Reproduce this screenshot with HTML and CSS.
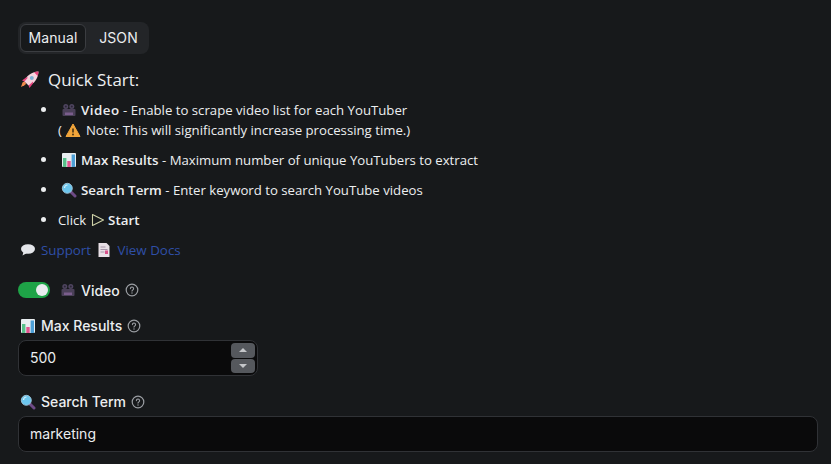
FILE: index.html
```html
<!DOCTYPE html>
<html lang="en">
<head>
<meta charset="utf-8">
<title>Quick Start</title>
<link rel="stylesheet" href="styles.css">
</head>
<body>
<svg class="defs" width="0" height="0" aria-hidden="true">
  <defs>
    <symbol id="cam" viewBox="0 0 16 16">
      <circle cx="4.800" cy="4.500" r="2.500" fill="#4f4560"/><circle cx="10.800" cy="4.500" r="2.500" fill="#4f4560"/>
      <rect x="1.500" y="7" width="13" height="7" rx="1" fill="#4a4058"/>
      <rect x="4" y="10.500" width="8" height="2.500" fill="#7a5d8c"/>
      <circle cx="4.800" cy="4.500" r="1" fill="#2a2534"/><circle cx="10.800" cy="4.500" r="1" fill="#2a2534"/>
    </symbol>
    <symbol id="chart" viewBox="0 0 16 16">
      <rect x="1" y="1" width="14" height="14" rx="1" fill="#e8edf0"/>
      <rect x="2" y="6" width="3.400" height="9" fill="#57c08a"/>
      <rect x="6.300" y="9" width="3.400" height="6" fill="#e2558f"/>
      <rect x="10.600" y="2.500" width="3.400" height="12.500" fill="#4d9fd6"/>
    </symbol>
    <symbol id="lens" viewBox="0 0 16 16">
      <path d="M9.500 9.500 14 14" stroke="#6d4a85" stroke-width="3" stroke-linecap="round"/>
      <circle cx="6.300" cy="6.300" r="5" fill="#6cc6ee"/>
      <circle cx="6.300" cy="6.300" r="5" fill="none" stroke="#9fc4d8" stroke-width=".9"/>
      <path d="M3.500 6a3 3 0 0 1 3-3" stroke="#d8f2fc" stroke-width="1.200" fill="none"/>
    </symbol>
    <symbol id="help" viewBox="0 0 14 14">
      <circle cx="7" cy="7" r="5.800" fill="none" stroke="#9b9ea3" stroke-width="1.200"/>
      <path d="M5.400 5.600a1.600 1.600 0 1 1 2.500 1.300c-.6.400-.9.700-.9 1.200" fill="none" stroke="#9b9ea3" stroke-width="1.100" stroke-linecap="round"/>
      <circle cx="7" cy="10" r=".7" fill="#9b9ea3"/>
    </symbol>
  </defs>
</svg>

<main class="page">
  <div class="tabs">
    <button class="tab tab-active">Manual</button>
    <button class="tab tab-json">JSON</button>
  </div>

  <h2 class="title">
    <svg class="rocket" viewBox="0 0 20 20" aria-hidden="true">
      <path d="M5 11 2.500 12.500 1 17l3.500-1.800L6 14z" fill="#f08a4b"/>
      <path d="M4.500 11.500C6 6 11 2 18.500 1.500 18 9 14 14 8.500 15.500z" fill="#f7d4df"/>
      <path d="M14 2.200c1.500-.5 3-.7 4.500-.7-.1 1.500-.3 3-.8 4.400z" fill="#e5447e"/>
      <path d="M4.500 11.500 2 10.500 6 7.500h2zM8.500 15.500 9.500 18l3.500-4.500v-2z" fill="#e5447e"/>
      <circle cx="11.800" cy="8" r="2" fill="#7fb2d6"/>
    </svg>
    <span>Quick Start:</span>
  </h2>

  <ul class="steps">
    <li>
      <svg class="emoji emoji-after"><use href="#cam"/></svg><b class="wide">Video</b> - Enable to scrape video list for each YouTuber<br>
      (<svg class="emoji warn" viewBox="0 0 16 16" aria-hidden="true"><path d="M8 2 15 14.500H1z" fill="#f2a53a" stroke="#f2a53a" stroke-linejoin="round"/><path d="M8 6.500v4" stroke="#3a2a10" stroke-width="1.500"/><circle cx="8" cy="12.500" r=".9" fill="#3a2a10"/></svg>Note: This will significantly increase processing time.)
    </li>
    <li><svg class="emoji emoji-after"><use href="#chart"/></svg><b>Max Results</b> - Maximum number of unique YouTubers to extract</li>
    <li><svg class="emoji emoji-after"><use href="#lens"/></svg><b>Search Term</b> - Enter keyword to search YouTube videos</li>
    <li>Click <svg class="play" viewBox="0 0 14 14" aria-hidden="true"><path d="M1.500 1.500 12.500 7 1.500 12.500z" fill="none" stroke="#cfd2a8" stroke-width="1.100" stroke-linejoin="round"/></svg> <b>Start</b></li>
  </ul>

  <p class="links">
    <svg class="emoji" viewBox="0 0 16 16" aria-hidden="true"><ellipse cx="8" cy="7" rx="7" ry="4.800" fill="#e4e6ea"/><path d="M3.500 10 2.500 13.500 7 11z" fill="#e4e6ea"/></svg><a class="link" href="#">Support</a>
    <svg class="emoji doc" viewBox="0 0 16 16" aria-hidden="true"><path d="M2.500 1h8l3 3v11h-11z" fill="#e8dfe6"/><path d="M4.500 5h5M4.500 7.500h7M4.500 10h4" stroke="#a594a8" stroke-width="1"/><rect x="9" y="8.500" width="3" height="3.500" fill="#d9508a"/></svg><a class="link link-docs" href="#">View Docs</a>
  </p>

  <div class="switch-row">
    <span class="toggle"><span class="knob"></span></span>
    <svg class="emoji"><use href="#cam"/></svg>
    <span class="label-text row-text">Video</span>
    <svg class="help"><use href="#help"/></svg>
  </div>

  <label class="field">
    <span class="label"><svg class="emoji"><use href="#chart"/></svg><span class="label-text">Max Results</span><svg class="help"><use href="#help"/></svg></span>
    <span class="input input-number">
      <span class="value">500</span>
      <span class="stepper">
        <span class="step"><span class="arrow-up"></span></span>
        <span class="step"><span class="arrow-down"></span></span>
      </span>
    </span>
  </label>

  <label class="field">
    <span class="label"><svg class="emoji"><use href="#lens"/></svg><span class="label-text">Search Term</span><svg class="help"><use href="#help"/></svg></span>
    <span class="input"><span class="value">marketing</span></span>
  </label>
</main>
</body>
</html>
```
FILE: styles.css
```css
* { box-sizing: border-box; }
html, body { margin: 0; height: 100%; }
body {
  background: #17191b;
  color: #eceef0;
  font-family: "Open Sans", "Noto Sans", sans-serif;
  overflow: hidden;
}
.defs { display: block; height: 0; }
.page { padding: 22px 13px 0 18px; }

.tabs {
  display: inline-flex;
  gap: 2px;
  padding: 2px;
  background: #232528;
  border-radius: 8px;
  height: 32px;
}
.tab {
  font: 400 14px/26px Inter, sans-serif;
  letter-spacing: .1px;
  color: #eceef0;
  background: none;
  border: 1px solid transparent;
  border-radius: 6px;
  padding: 0;
  height: 28px;
}
.tab-active { background: #17191b; border-color: #3b3d41; width: 66px; }
.tab-json { width: 59px; padding-left: 2px; }

.title {
  display: flex;
  align-items: center;
  gap: 8px;
  margin: 13px 0 0 2px;
  font-size: 16.900px;
  font-weight: 400;
  line-height: 26px;
}
.rocket { width: 20px; height: 20px; }

.steps {
  margin: 7px 0 0 2px;
  padding: 0 0 0 38px;
  font-size: 13.200px;
  line-height: 20px;
}
.steps li { margin-bottom: 10px; }
.steps li::marker { font-size: 14px; }
.steps b { font-weight: 600; font-size: 13.350px; }
.steps .wide { letter-spacing: .5px; }
.emoji { width: 16px; height: 16px; vertical-align: -3px; }
.emoji-after { margin: 0 4px 0 3px; }
.warn { margin: 0 5px 0 3px; }
.play { width: 14px; height: 14px; margin: 0 0 0 1px; vertical-align: -2px; }

.links { margin: 0 0 0 2px; font-size: 13.350px; line-height: 20px; }
.link { color: #2f4fa8; text-decoration: none; margin-left: 5px; margin-right: 0; }
.link-docs { margin-left: 6px; }
.doc { margin-left: 1px; }

.switch-row {
  display: flex;
  align-items: center;
  height: 20px;
  margin-top: 20px;
}
.toggle {
  display: flex;
  justify-content: flex-end;
  align-items: center;
  width: 32px;
  height: 16px;
  padding: 2px;
  background: #1ea347;
  border-radius: 8px;
  margin-right: 10px;
}
.knob { width: 12px; height: 12px; background: #e9ecef; border-radius: 50%; }
.label-text { font: 500 14px/20px Inter, sans-serif; margin-left: 5px; }
.row-text { margin-top: 2px; }
.help { width: 14px; height: 14px; margin-left: 5px; }

.field { display: block; margin-top: 16px; }
.label { display: flex; align-items: center; height: 20px; margin-left: 2px; margin-bottom: 4px; }
.input {
  display: flex;
  align-items: center;
  justify-content: space-between;
  height: 36px;
  background: #0a0a0b;
  border: 1px solid #303236;
  border-radius: 8px;
  padding: 0 1px 0 11px;
  font: 400 14px/20px Inter, sans-serif;
}
.input-number { width: 240px; }
.stepper { display: flex; flex-direction: column; gap: 1px; padding-right: 1px; }
.step {
  display: flex;
  align-items: center;
  justify-content: center;
  width: 24px;
  height: 14.500px;
  background: #55585d;
  border-radius: 4px;
}
.arrow-up, .arrow-down { width: 0; height: 0; border-left: 4px solid transparent; border-right: 4px solid transparent; }
.arrow-up { border-bottom: 4px solid #c4c6c9; }
.arrow-down { border-top: 4px solid #c4c6c9; }
```
